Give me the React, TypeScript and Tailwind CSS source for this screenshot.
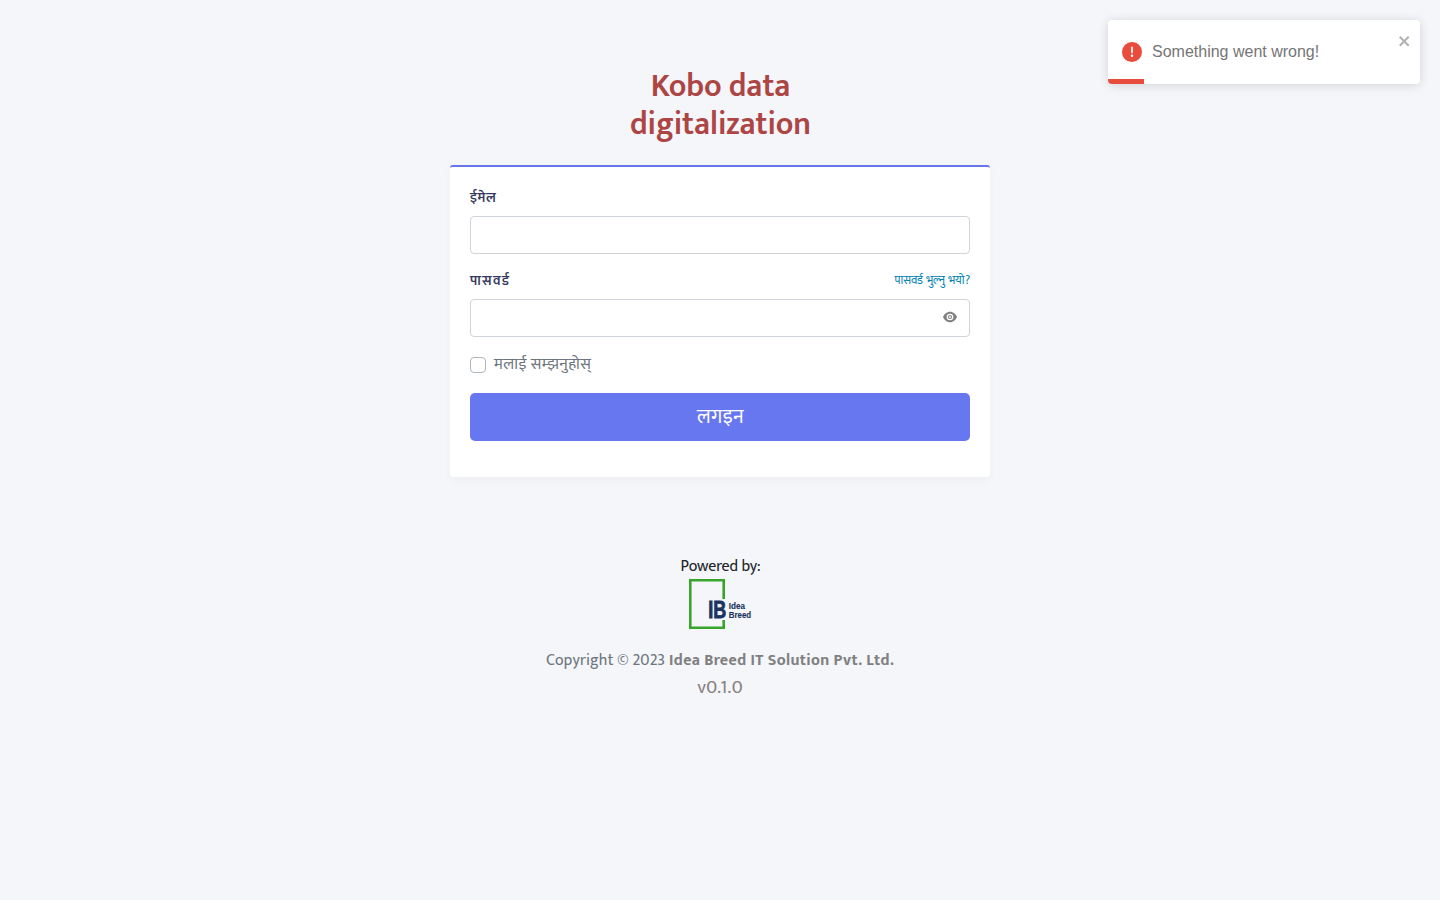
import React from 'react';

function Toast() {
  return (
    <div className="absolute right-5 top-5 h-16 w-[312px] overflow-hidden rounded bg-white font-['Liberation_Sans',sans-serif] shadow-[0_1px_10px_0_rgba(0,0,0,0.1),0_2px_15px_0_rgba(0,0,0,0.05)]">
      <div className="flex h-full items-center pl-3.5">
        <svg className="size-5 shrink-0" viewBox="0 0 24 24" fill="#e74c3c">
          <path d="M11.983 0a12.206 12.206 0 00-8.51 3.653A11.8 11.8 0 000 12.207 11.779 11.779 0 0011.8 24h.214A12.111 12.111 0 0024 11.791 11.766 11.766 0 0011.983 0zM10.5 16.542a1.476 1.476 0 011.449-1.53h.027a1.527 1.527 0 011.523 1.47 1.475 1.475 0 01-1.449 1.53h-.027a1.529 1.529 0 01-1.523-1.47zM11 12.5v-6a1 1 0 012 0v6a1 1 0 11-2 0z" />
        </svg>
        <span className="ml-2.5 grow text-base leading-6 text-[#757575]">Something went wrong!</span>
        <button type="button" aria-label="close" className="mr-2 mt-[13px] self-start">
          <svg className="h-4 w-3.5" viewBox="0 0 14 16" fill="#000" fillOpacity="0.3">
            <path fillRule="evenodd" d="M7.71 8.23l3.75 3.75-1.48 1.48-3.75-3.75-3.75 3.75L1 11.98l3.75-3.75L1 4.48 2.48 3l3.75 3.75L9.98 3l1.48 1.48-3.75 3.75z" />
          </svg>
        </button>
      </div>
      <div className="absolute bottom-0 left-0 h-[5px] w-[36.4px] bg-[#e74c3c]" />
    </div>
  );
}

function Logo() {
  return (
    <svg className="block h-[50px] w-[62px] overflow-visible" viewBox="0 0 62 50" fontFamily="'Liberation Sans', sans-serif" fontWeight="700" fill="#1c355e">
      <path d="M34.7 20V1.3H1.3V48.7H34.7V41" fill="none" stroke="#38a62b" strokeWidth="2.6" />
      <text x="19.2" y="38.8" fontSize="23.5" textLength="18" lengthAdjust="spacingAndGlyphs" stroke="#1c355e" strokeWidth="0.9">IB</text>
      <text x="39.8" y="30" fontSize="9.5" textLength="16.2" lengthAdjust="spacingAndGlyphs" stroke="#1c355e" strokeWidth="0.15">Idea</text>
      <text x="39.8" y="39.4" fontSize="9.5" textLength="22.4" lengthAdjust="spacingAndGlyphs" stroke="#1c355e" strokeWidth="0.15">Breed</text>
    </svg>
  );
}

export default function App() {
  return (
    <div className="relative min-h-screen bg-[#f4f6fa] font-['Mukta','Noto_Sans',sans-serif] text-[#212529]">
      <main className="mx-auto flex w-[540px] flex-col items-center pt-[68px]">
        <h1 className="h-[97px] w-[200px] pl-px text-center text-[32px] font-semibold leading-[38px] tracking-[-0.15px] text-[#ad4545]">Kobo data digitalization</h1>
        <form className="h-[312px] w-full rounded-[3px] border-t-2 border-[#6777ef] bg-white px-5 pt-5 shadow-[0_4px_8px_rgba(0,0,0,0.03)]">
          <label className="block h-[29px] text-[14px] font-semibold leading-[22px] tracking-[0.5px] text-[#34395e]">ईमेल</label>
          <input className="block h-[38px] w-full rounded border border-[#ced4da] px-3" />
          <div className="mt-4 flex h-[29px] justify-between">
            <label className="text-[14px] font-semibold leading-[22px] tracking-[1.2px] text-[#34395e]">पासवर्ड</label>
            <a className="text-[11.8px] leading-[22px] tracking-[-0.2px] text-[#0080b0] [word-spacing:1px]">पासवर्ड भुल्नु भयो?</a>
          </div>
          <div className="flex h-[38px] items-center rounded border border-[#ced4da] pr-3">
            <input type="password" className="h-full min-w-0 grow px-3 outline-none" />
            <svg className="mb-0.5 size-[14px]" viewBox="0 0 24 24" fill="#808080">
              <path fillRule="evenodd" d="M12 3C6.5 3 2 7 0 12c2 5 6.5 9 12 9s10-4 12-9c-2-5-6.5-9-12-9zm0 14.7a5.7 5.7 0 1 1 0-11.4 5.700 5.700 0 0 1 0 11.400zm0-2.200a3.500 3.500 0 1 0 0-7 3.500 3.500 0 0 0 0 7zm0-1.800a1.700 1.700 0 1 1 0-3.400 1.700 1.700 0 0 1 0 3.400z" />
            </svg>
          </div>
          <label className="mt-4 flex h-10 gap-2 leading-6 tracking-[0.38px] text-[#6c757d]">
            <input type="checkbox" className="mt-1 size-4 appearance-none rounded border border-[#adb5bd] bg-white" />
            मलाई सम्झनुहोस्
          </label>
          <button type="button" className="block h-12 w-full rounded-[5px] bg-[#6777ef] pl-px text-xl tracking-[0.3px] text-white">लगइन</button>
        </form>
        <p className="mt-[78px] pl-px leading-6 tracking-[-0.15px]">Powered by:</p>
        <Logo />
        <p className="mt-5 leading-6 tracking-[0.15px] text-[#6c757d]">
          Copyright © 2023 <b className="tracking-[0.33px] text-[#808080]">Idea Breed IT Solution Pvt. Ltd.</b>
        </p>
        <p className="text-[19px] leading-[30px] tracking-[0.2px] text-[#8a8080]">v0.1.0</p>
      </main>
      <Toast />
    </div>
  );
}
